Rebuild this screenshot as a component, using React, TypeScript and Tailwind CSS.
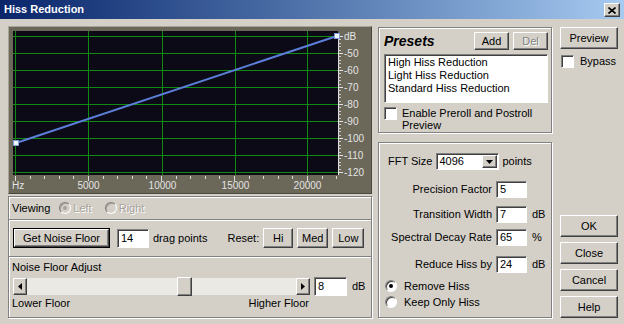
import React from "react";

// win2000 style bevels
const raised =
  "bg-[#d4d0c8] border border-t-white border-l-white border-r-[#404040] border-b-[#404040] shadow-[inset_-1px_-1px_0_#808080]";
const sunken =
  "bg-white border border-t-[#808080] border-l-[#808080] border-r-white border-b-white shadow-[inset_1px_1px_0_#404040]";
const groupBox = "border border-[#808080] shadow-[inset_1px_1px_0_#ffffff,1px_1px_0_#ffffff]";

type BtnProps = { children: React.ReactNode; className?: string; disabled?: boolean };

function Btn({ children, className = "", disabled = false }: BtnProps) {
  return (
    <div
      className={`${raised} flex items-center justify-center ${
        disabled ? "text-[#808080] [text-shadow:1px_1px_0_#ffffff]" : ""
      } ${className}`}
    >
      {children}
    </div>
  );
}

function Edit({ value, className = "" }: { value: string; className?: string }) {
  return <div className={`${sunken} flex items-center pl-[3px] ${className}`}>{value}</div>;
}

function Check({ className = "" }: { className?: string }) {
  return <div className={`${sunken} w-[13px] h-[13px] shrink-0 ${className}`} />;
}

function Radio({ checked = false, disabled = false, className = "" }: { checked?: boolean; disabled?: boolean; className?: string }) {
  return (
    <div
      className={`w-[12px] h-[12px] shrink-0 rounded-full border border-t-[#808080] border-l-[#808080] border-r-white border-b-white flex items-center justify-center ${
        disabled ? "bg-[#d4d0c8] shadow-[inset_1px_1px_0_#a8a49c]" : "bg-white shadow-[inset_1px_1px_0_#404040]"
      } ${className}`}
    >
      {checked && <div className={`w-[4px] h-[4px] rounded-full ${disabled ? "bg-[#a8a49c]" : "bg-black"}`} />}
    </div>
  );
}

function Graph() {
  const hLines = [36, 53, 70, 87, 104, 121, 138, 155, 172];
  const vLines = [15, 88, 162, 235, 307];
  const dbLabels = ["dB", "-50", "-60", "-70", "-80", "-90", "-100", "-110", "-120"];
  const hzLabels = ["5000", "10000", "15000", "20000"];
  const khz = Array.from({ length: 23 }, (_, i) => 15 + i * 14.6);
  const dbTicks: number[] = [];
  for (let i = 0; i < hLines.length - 1; i++) {
    for (let k = 1; k < 5; k++) dbTicks.push(hLines[i] + (k * 17) / 5);
  }

  return (
    <div className="h-[168px] bg-[#6b6759] border border-t-[#a8a498] border-l-[#a8a498] border-r-[#4a473e] border-b-[#4a473e]">
      <svg width="362" height="166" className="block">
        <g transform="translate(-9,-27)">
          <rect x="13" y="31" width="325" height="144" fill="#0b0a16" />
          {hLines.map((y) => (
            <line key={y} x1="13" x2="338" y1={y + 0.5} y2={y + 0.5} stroke="#118a11" />
          ))}
          {vLines.map((x) => (
            <line key={x} x1={x + 0.5} x2={x + 0.5} y1="31" y2="175" stroke="#118a11" />
          ))}
          {/* dB ruler */}
          <line x1="338.5" x2="338.5" y1="33" y2="175" stroke="#e2e2e2" />
          {hLines.map((y) => (
            <line key={"m" + y} x1="338" x2="343" y1={y + 0.5} y2={y + 0.5} stroke="#e2e2e2" />
          ))}
          {dbTicks.map((y) => (
            <line key={"t" + y} x1="338" x2="341" y1={Math.round(y) + 0.5} y2={Math.round(y) + 0.5} stroke="#cfcfcf" />
          ))}
          {dbLabels.map((t, i) => (
            <text key={t} x="344" y={hLines[i] + 4} fontSize="10" fill="#e4e4e4" fontFamily="Liberation Sans, Arial, sans-serif">
              {t}
            </text>
          ))}
          {/* Hz ruler */}
          {khz.map((x, i) => (
            <line
              key={"h" + i}
              x1={Math.round(x) + 0.5}
              x2={Math.round(x) + 0.5}
              y1="176"
              y2={i % 5 === 0 ? 181 : 179}
              stroke="#d8d8d8"
            />
          ))}
          <text x="12" y="189" fontSize="10" fill="#e4e4e4" fontFamily="Liberation Sans, Arial, sans-serif">
            Hz
          </text>
          {hzLabels.map((t, i) => (
            <text
              key={t}
              x={vLines[i + 1] + 0.5}
              y="189"
              fontSize="10"
              fill="#e4e4e4"
              textAnchor="middle"
              fontFamily="Liberation Sans, Arial, sans-serif"
            >
              {t}
            </text>
          ))}
          {/* noise floor curve */}
          <line x1="16" y1="143" x2="337" y2="36" stroke="#5b7fd8" strokeWidth="2" />
          <rect x="13.5" y="140.5" width="5" height="5" fill="#eef8f6" stroke="#7d9bd8" />
          <rect x="334.5" y="33.5" width="5" height="5" fill="#eef8f6" stroke="#7d9bd8" />
        </g>
      </svg>
    </div>
  );
}

function Arrow({ dir }: { dir: "left" | "right" | "down" }) {
  if (dir === "down")
    return (
      <svg width="7" height="4">
        <path d="M0 0h7L3.5 4z" fill="#000" />
      </svg>
    );
  return (
    <svg width="4" height="7">
      <path d={dir === "left" ? "M4 0v7L0 3.5z" : "M0 0v7L4 3.5z"} fill="#000" />
    </svg>
  );
}

export default function App() {
  return (
    <div className="w-[624px] h-[324px] bg-[#d4d0c8] overflow-hidden text-[11px] leading-[13px] text-black font-['Liberation_Sans',Arial,sans-serif] flex flex-col">
      {/* title bar */}
      <div className="h-[19px] shrink-0 bg-linear-to-r from-[#0a246a] to-[#a6caf0] flex items-center justify-between pl-[4px] pr-[4px]">
        <span className="text-white font-bold">Hiss Reduction</span>
        <div className={`${raised} w-[16px] h-[14px] flex items-center justify-center mt-[1px]`}>
          <svg width="8" height="7">
            <path d="M0.5 0.5L7.5 6.5M7.5 0.5L0.5 6.5" stroke="#000" strokeWidth="1.6" />
          </svg>
        </div>
      </div>

      <div className="flex h-[292px] mt-[7px] pl-[8px]">
        {/* left column */}
        <div className="w-[364px] flex flex-col">
          <Graph />
          <div className={`mt-[2px] h-[122px] ${groupBox} flex flex-col`}>
            <div className="h-[23px] flex items-center pl-[3px] border-b border-[#808080] shadow-[0_1px_0_#ffffff]">
              <span>Viewing</span>
              <Radio checked disabled className="ml-[9px]" />
              <span className="ml-[2px] text-[#a8a49c] [text-shadow:1px_1px_0_#ffffff]">Left</span>
              <Radio disabled className="ml-[13px]" />
              <span className="ml-[2px] text-[#a8a49c] [text-shadow:1px_1px_0_#ffffff]">Right</span>
            </div>
            <div className="h-[37px] flex items-center pl-[4px] border-b border-[#808080] shadow-[0_1px_0_#ffffff]">
              <div className="border border-black">
                <Btn className="w-[95px] h-[18px]">Get Noise Floor</Btn>
              </div>
              <Edit value="14" className="ml-[7px] w-[32px] h-[19px]" />
              <span className="ml-[4px]">drag points</span>
              <span className="ml-[20px]">Reset:</span>
              <Btn className="ml-[4px] w-[30px] h-[20px]">Hi</Btn>
              <Btn className="ml-[4px] w-[31px] h-[20px]">Med</Btn>
              <Btn className="ml-[4px] w-[32px] h-[20px]">Low</Btn>
            </div>
            <div className="flex flex-col pt-[4px]">
              <span className="pl-[3px]">Noise Floor Adjust</span>
              <div className="mt-[3px] h-[19px] flex items-center pl-[4px]">
                <Btn className="w-[14px] h-[17px]">
                  <Arrow dir="left" />
                </Btn>
                <div className="relative w-[269px] h-[17px] bg-[#ebe9e4]">
                  <div className={`${raised} absolute left-[150px] top-[-1px] w-[15px] h-[19px]`} />
                </div>
                <Btn className="w-[14px] h-[17px]">
                  <Arrow dir="right" />
                </Btn>
                <Edit value="8" className="ml-[4px] w-[33px] h-[19px]" />
                <span className="ml-[5px]">dB</span>
              </div>
              <div className="mt-[1px] flex justify-between pl-[3px] pr-[62px]">
                <span>Lower Floor</span>
                <span>Higher Floor</span>
              </div>
            </div>
          </div>
        </div>

        {/* middle column */}
        <div className="ml-[6px] w-[174px] flex flex-col pt-[1px]">
          <div className={`h-[106px] ${groupBox} flex flex-col`}>
            <div className="mt-[4px] h-[18px] flex items-center pl-[5px] pr-[3px]">
              <span className="text-[14px] font-bold italic flex-1">Presets</span>
              <Btn className="w-[35px] h-[18px]">Add</Btn>
              <Btn disabled className="ml-[4px] w-[35px] h-[18px]">
                Del
              </Btn>
            </div>
            <div className={`${sunken} ml-[5px] mt-[4px] w-[164px] h-[49px] pl-[3px] pt-[1px]`}>
              <div>High Hiss Reduction</div>
              <div>Light Hiss Reduction</div>
              <div>Standard Hiss Reduction</div>
            </div>
            <div className="mt-[4px] flex pl-[5px]">
              <Check />
              <span className="ml-[5px] w-[140px] leading-[12px]">Enable Preroll and Postroll Preview</span>
            </div>
          </div>

          <div className={`mt-[9px] h-[176px] ${groupBox} flex flex-col`}>
            <div className="mt-[10px] h-[17px] flex items-center pl-[9px]">
              <span>FFT Size</span>
              <div className={`${sunken} ml-[4px] w-[63px] h-[17px] flex items-center`}>
                <span className="flex-1 pl-[2px]">4096</span>
                <Btn className="w-[15px] h-[13px] mr-[1px]">
                  <Arrow dir="down" />
                </Btn>
              </div>
              <span className="ml-[3px]">points</span>
            </div>
            {[
              { label: "Precision Factor", value: "5", unit: "", mt: "mt-[11px]" },
              { label: "Transition Width", value: "7", unit: "dB", mt: "mt-[8px]" },
              { label: "Spectral Decay Rate", value: "65", unit: "%", mt: "mt-[6px]" },
              { label: "Reduce Hiss by", value: "24", unit: "dB", mt: "mt-[10px]" },
            ].map((r) => (
              <div key={r.label} className={`${r.mt} h-[17px] flex items-center`}>
                <span className="w-[113px] text-right">{r.label}</span>
                <Edit value={r.value} className="ml-[4px] w-[31px] h-[17px]" />
                <span className="ml-[5px]">{r.unit}</span>
              </div>
            ))}
            <div className="mt-[6px] h-[14px] flex items-center pl-[6px]">
              <Radio checked />
              <span className="ml-[7px]">Remove Hiss</span>
            </div>
            <div className="mt-[2px] h-[14px] flex items-center pl-[6px]">
              <Radio />
              <span className="ml-[7px]">Keep Only Hiss</span>
            </div>
          </div>
        </div>

        {/* right column */}
        <div className="ml-[8px] w-[58px] flex flex-col pt-[1px]">
          <Btn className="h-[22px]">Preview</Btn>
          <div className="mt-[6px] flex items-center pl-[1px]">
            <Check />
            <span className="ml-[6px]">Bypass</span>
          </div>
          <div className="flex-1" />
          <div className="flex flex-col gap-[5px]">
            <Btn className="h-[22px]">OK</Btn>
            <Btn className="h-[22px]">Close</Btn>
            <Btn className="h-[22px]">Cancel</Btn>
            <Btn className="h-[22px]">Help</Btn>
          </div>
        </div>
      </div>
    </div>
  );
}
